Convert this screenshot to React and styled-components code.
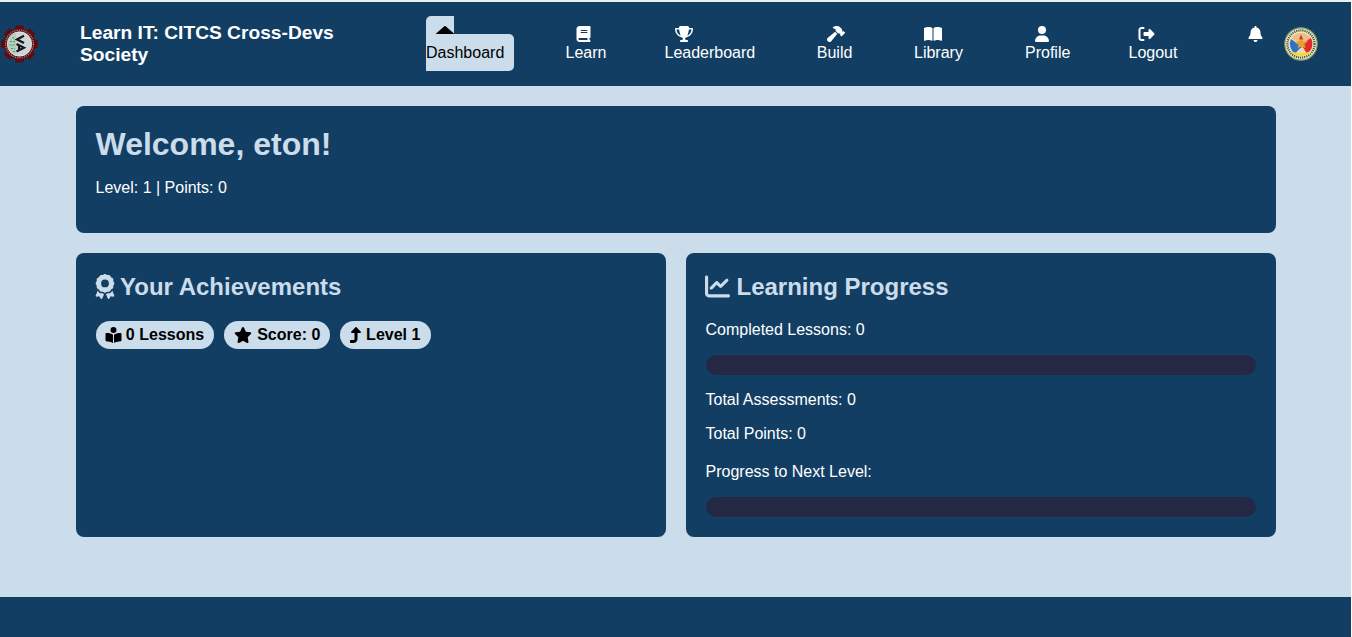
import React from "react";
import styled, { createGlobalStyle } from "styled-components";
import {
  FaHouse, FaBook, FaTrophy, FaHammer, FaBookOpen, FaUser, FaRightFromBracket,
  FaBell, FaAward, FaBookOpenReader, FaStar, FaChartLine, FaTurnUp,
} from "react-icons/fa6";

const navy = "#133e64";
const pale = "#cbdceb";

const Global = createGlobalStyle`
  * { box-sizing: border-box; }
  html { background: #fff; overflow: hidden; }
  body { margin: 0; font: 16px/18px "Liberation Sans", Arial, sans-serif; color: #fff; }
  h1, h2, p { margin: 0; }
  svg { flex: none; }
`;

const Page = styled.div`
  width: 1351px;
  height: 637px;
  display: flex;
  flex-direction: column;
  background: ${pale};
`;

const Header = styled.header`
  height: 86px;
  flex: none;
  display: flex;
  align-items: flex-start;
  background: ${navy};
  border-top: 2px solid #e9f1ea;
`;

const Emblem = styled.svg`
  display: block;
  width: ${(p) => p.$size}px;
  height: ${(p) => p.$size}px;
  margin-top: ${(p) => p.$top}px;
`;

const Brand = styled.div`
  width: 388px;
  padding: 20px 90px 0 42px;
  font-size: 19.2px;
  line-height: 22px;
  font-weight: bold;
`;

const Nav = styled.nav`
  display: grid;
  grid-template-columns: 139.5px 99px 152.3px 97.2px 111px 103.5px 108.5px;
  padding-top: 24px;
`;

const NavItem = styled.div`
  white-space: nowrap;
`;

const NavLink = styled.a`
  padding: 10px;
  border-radius: 5px;
  color: ${(p) => (p.$active ? "#000" : "#fff")};
  background: ${(p) => (p.$active ? pale : "transparent")};
`;

const Glyph = styled.span`
  display: inline-flex;
  flex: none;
  vertical-align: -2px;
  margin: ${(p) => p.$shift || "0"};
  svg {
    display: block;
    width: ${(p) => p.$w}px;
    height: ${(p) => p.$h || 16}px;
  }
`;

const Bell = styled.div`
  width: 47px;
  padding: 24px 0 0 11px;
`;

const Main = styled.main`
  flex: 1;
  width: 1200px;
  margin: 20px auto 0 76px;
  display: grid;
  grid-template-columns: 1fr 1fr;
  grid-template-rows: 127px 284px;
  gap: 20px;
`;

const Card = styled.section`
  grid-column: ${(p) => (p.$wide ? "1 / -1" : "auto")};
  padding: 20px 20px 20px 19.5px;
  background: ${navy};
  border-radius: 8px;
`;

const Title = styled.h1`
  color: ${pale};
  font-size: 32px;
  line-height: 36px;
  margin-bottom: 17px;
`;

const Heading = styled.h2`
  display: flex;
  align-items: center;
  gap: ${(p) => p.$gap}px;
  height: 28px;
  color: ${pale};
  font-size: 24px;
  line-height: 28px;
  margin-bottom: 20px;
`;

const Badges = styled.div`
  display: flex;
  gap: 10px;
  padding-left: 0.5px;
`;

const Badge = styled.span`
  display: flex;
  align-items: center;
  justify-content: center;
  width: ${(p) => p.$width}px;
  height: 28px;
  gap: ${(p) => p.$gap}px;
  border-radius: 15px;
  background: ${pale};
  color: #000;
  font-weight: bold;
`;

const Line = styled.p`
  margin-bottom: ${(p) => p.$after}px;
`;

const Track = styled.div`
  height: 20px;
  margin: 0 0 16px 0.5px;
  border-radius: 10px;
  background: #252845;
`;

const Footer = styled.footer`
  height: 40px;
  flex: none;
  background: ${navy};
`;

const links = [
  ["Dashboard", FaHouse, 18],
  ["Learn", FaBook, 15],
  ["Leaderboard", FaTrophy, 18],
  ["Build", FaHammer, 18],
  ["Library", FaBookOpen, 18],
  ["Profile", FaUser, 14],
  ["Logout", FaRightFromBracket, 17],
];

function SocietyLogo() {
  return (
    <Emblem $size={38} $top={23} viewBox="0 0 38 38">
      <g fill="#5c0d12">
        {[0, 45, 90, 135].map((a) => (
          <rect key={a} x="15.300" y="0.600" width="8.400" height="36.800" rx="1" transform={`rotate(${a} 19.500 19)`} />
        ))}
        <circle cx="19.5" cy="19" r="15.8" />
      </g>
      <circle cx="19.5" cy="19" r="13.9" fill="none" stroke="#b58d8b" strokeWidth="1.2" strokeDasharray="1.2 1.1" />
      <circle cx="19.5" cy="19" r="12.2" fill="#d0d6d8" stroke="#efe7e6" strokeWidth="0.8" />
      <path d="M16 8a11.500 11.500 0 0 0 0 22z" fill="#b3cfbd" />
      <path d="M12 13h3M10 16.500h5M9.500 20h5M11 23.500h4M13 26.500h2" stroke="#4f9b6e" strokeWidth="1.2" strokeDasharray="2 1" />
      <path d="M24 10.800l-7 3.600 7 3.600M16.500 19l7.500 3.800-7.500 3.800M19 20.500v4.500" fill="none" stroke="#15191b" strokeWidth="2.2" />
    </Emblem>
  );
}

function CitySeal() {
  return (
    <Emblem $size={34} $top={25} viewBox="0 0 34 34">
      <circle cx="17" cy="17" r="16.2" fill="#f0f0d8" stroke="#82995a" strokeWidth="1.2" />
      <circle cx="17" cy="17" r="13.600" fill="none" stroke="#4a5440" strokeWidth="2.300" strokeDasharray="1.200 0.900" />
      <circle cx="17" cy="17" r="11.8" fill="#efe0a0" />
      <path d="M18 20L7 12A11.500 11.500 0 0 0 11 26.500z" fill="#326fc9" />
      <path d="M16 16l11-5A11.500 11.500 0 0 1 23 26.500z" fill="#e3272d" />
      <path d="M17 18l-9.500-7a11.500 11.500 0 0 1 19 0z" fill="#efbd8c" />
      <path d="M17 7.500l2.300 5H15z" fill="#d93427" />
      <path d="M11 16l4-2 3-1.500 1.500 2 5-1-4 3.500 1 4-4-1.500-4 1.500 1-3.500z" fill="#dfa52b" />
      <path d="M12.500 25l4-4 5 4z" fill="#ead9b8" />
      <path d="M8 24.500q9 3 18 0l.5 2q-9.500 5-19 0z" fill="#f2d83c" />
    </Emblem>
  );
}

export default function App() {
  return (
    <>
      <Global />
      <Page>
        <Header>
          <SocietyLogo />
          <Brand>Learn IT: CITCS Cross-Devs Society</Brand>
          <Nav>
            {links.map(([label, Icon, w], i) => (
              <NavItem key={label}>
                <NavLink $active={i === 0}>
                  <Glyph $w={w} $shift={i === 0 ? "0 0 0 -0.5px" : "0"}><Icon /></Glyph>
                  <br />
                  {label}
                </NavLink>
              </NavItem>
            ))}
          </Nav>
          <Bell><Glyph $w={15}><FaBell /></Glyph></Bell>
          <CitySeal />
        </Header>
        <Main>
          <Card $wide>
            <Title>Welcome, eton!</Title>
            <Line $after={0}>Level: 1 | Points: 0</Line>
          </Card>
          <Card>
            <Heading $gap={5}>
              <Glyph $w={20} $h={25} $shift="-2px 0 0 -0.5px"><FaAward /></Glyph>
              Your Achievements
            </Heading>
            <Badges>
              <Badge $width={118} $gap={4}><Glyph $w={17} $shift="-1px 0 0 -1px"><FaBookOpenReader /></Glyph> 0 Lessons</Badge>
              <Badge $width={106} $gap={5.5}><Glyph $w={18} $shift="-1px 0 0 0"><FaStar /></Glyph> Score: 0</Badge>
              <Badge $width={91} $gap={4.5}><Glyph $w={12} $shift="-1px 0 0 -1px"><FaTurnUp /></Glyph> Level 1</Badge>
            </Badges>
          </Card>
          <Card>
            <Heading $gap={7}>
              <Glyph $w={25} $h={25} $shift="-2px 0 0 -1px"><FaChartLine /></Glyph>
              Learning Progress
            </Heading>
            <Line $after={16}>Completed Lessons: 0</Line>
            <Track />
            <Line $after={16}>Total Assessments: 0</Line>
            <Line $after={20}>Total Points: 0</Line>
            <Line $after={16}>Progress to Next Level:</Line>
            <Track />
          </Card>
        </Main>
        <Footer />
      </Page>
    </>
  );
}
